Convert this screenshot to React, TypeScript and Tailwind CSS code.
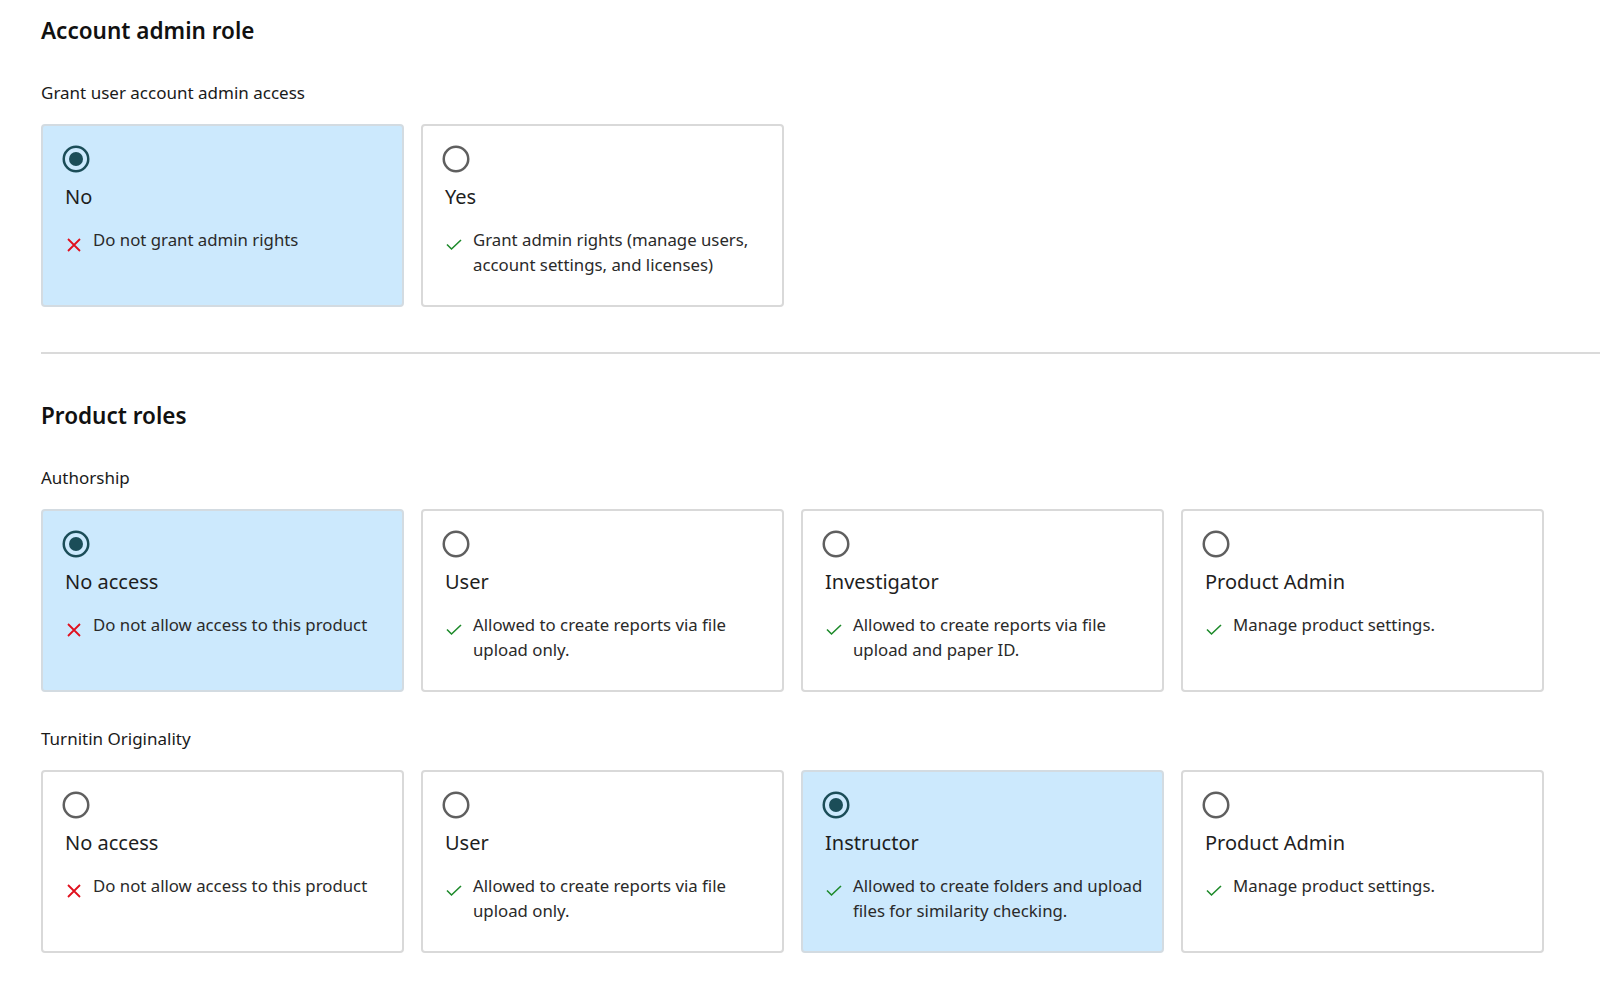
import { useState } from 'react'

type Option = {
  title: string
  desc: string
  allowed: boolean
}

const adminOptions: Option[] = [
  { title: 'No', desc: 'Do not grant admin rights', allowed: false },
  { title: 'Yes', desc: 'Grant admin rights (manage users, account settings, and licenses)', allowed: true },
]

const authorshipOptions: Option[] = [
  { title: 'No access', desc: 'Do not allow access to this product', allowed: false },
  { title: 'User', desc: 'Allowed to create reports via file upload only.', allowed: true },
  { title: 'Investigator', desc: 'Allowed to create reports via file upload and paper ID.', allowed: true },
  { title: 'Product Admin', desc: 'Manage product settings.', allowed: true },
]

const originalityOptions: Option[] = [
  { title: 'No access', desc: 'Do not allow access to this product', allowed: false },
  { title: 'User', desc: 'Allowed to create reports via file upload only.', allowed: true },
  { title: 'Instructor', desc: 'Allowed to create folders and upload files for similarity checking.', allowed: true },
  { title: 'Product Admin', desc: 'Manage product settings.', allowed: true },
]

function Radio({ checked }: { checked: boolean }) {
  return (
    <svg width="28" height="28" viewBox="0 0 28 28" className="block">
      <circle
        cx="14"
        cy="14"
        r="12.25"
        fill="none"
        stroke={checked ? '#1b4d58' : '#5f5f5f'}
        strokeWidth="2.5"
      />
      {checked && <circle cx="14" cy="14" r="7" fill="#1b4d58" />}
    </svg>
  )
}

function StatusIcon({ allowed }: { allowed: boolean }) {
  if (allowed) {
    return (
      <svg width="18" height="18" viewBox="0 0 18 18" className="shrink-0 mt-[8px]">
        <path d="M2 9.5 L6.5 14 L16 5" fill="none" stroke="#1d8a2a" strokeWidth="1.6" />
      </svg>
    )
  }
  return (
    <svg width="18" height="18" viewBox="0 0 18 18" className="shrink-0 mt-[8px]">
      <path d="M3 4 L15 16 M15 4 L3 16" fill="none" stroke="#e0101e" strokeWidth="1.8" />
    </svg>
  )
}

function Card({ option, checked, onSelect }: { option: Option; checked: boolean; onSelect: () => void }) {
  return (
    <button
      type="button"
      onClick={onSelect}
      className={
        'w-[363px] h-[183px] shrink-0 rounded-[4px] border-2 text-left pl-[19px] pr-[8px] pt-[19px] flex flex-col items-start ' +
        (checked ? 'bg-[#cce9fd] border-[#d3dbe1]' : 'bg-white border-[#d9d9d9]')
      }
    >
      <Radio checked={checked} />
      <div className="mt-[10px] text-[20px] leading-[28px] text-[#1e1e1e] pl-[3px]">{option.title}</div>
      <div className="mt-[16px] flex gap-[10px] pl-[3px] w-full">
        <StatusIcon allowed={option.allowed} />
        <p className="flex-1 text-[16.8px] leading-[25px] text-[#2a2a2a]">{option.desc}</p>
      </div>
    </button>
  )
}

function Group({ label, options, initial }: { label: string; options: Option[]; initial: number }) {
  const [selected, setSelected] = useState(initial)
  return (
    <div>
      <div className="text-[17px] leading-[24px] text-[#1a1a1a]">{label}</div>
      <div className="mt-[19px] flex gap-[17px]">
        {options.map((o, i) => (
          <Card key={o.title} option={o} checked={selected === i} onSelect={() => setSelected(i)} />
        ))}
      </div>
    </div>
  )
}

export default function App() {
  return (
    <div
      className="min-h-screen bg-white pt-[16px]"
      style={{ fontFamily: '"Noto Sans", "Open Sans", sans-serif' }}
    >
      <section className="pl-[41px]">
        <h2 className="text-[22.5px] leading-[30px] font-semibold text-[#111]">Account admin role</h2>
        <div className="mt-[35px]">
          <Group label="Grant user account admin access" options={adminOptions} initial={0} />
        </div>
      </section>

      <div className="ml-[41px] mt-[45px] h-[2px] bg-[#dadada]" />

      <section className="pl-[41px] pt-[47px]">
        <h2 className="text-[22.5px] leading-[30px] font-semibold text-[#111]">Product roles</h2>
        <div className="mt-[35px] flex flex-col gap-[35px]">
          <Group label="Authorship" options={authorshipOptions} initial={0} />
          <Group label="Turnitin Originality" options={originalityOptions} initial={2} />
        </div>
      </section>
    </div>
  )
}
